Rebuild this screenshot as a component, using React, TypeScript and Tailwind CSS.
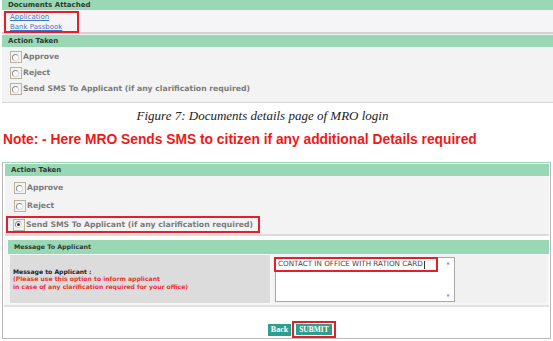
import React from 'react';

const Radio: React.FC<{ checked?: boolean }> = ({ checked }) => (
  <span className="w-[12px] h-[12px] border border-[#b8b39a] flex items-center justify-start pl-[1px] mr-[1px] shrink-0">
    <span className="w-[7px] h-[7px] rounded-full border border-[#8f8f8f] border-r-[#d6d6d6] border-b-[#d6d6d6] bg-white flex items-center justify-center">
      {checked && <span className="w-[3px] h-[3px] rounded-full bg-[#333]" />}
    </span>
  </span>
);

const RadioRow: React.FC<{ label: string; checked?: boolean; boxed?: boolean }> = ({ label, checked, boxed }) => (
  <div
    className={
      boxed
        ? 'flex items-center h-[17px] border-2 border-[#e0202a] w-[254px] -ml-[8px] pl-[5px]'
        : 'flex items-center h-[16px]'
    }
  >
    <Radio checked={checked} />
    <span className="text-[7.7px] font-bold text-[#7b7b7b] whitespace-nowrap">{label}</span>
  </div>
);

const Header: React.FC<{ title: string; className?: string }> = ({ title, className }) => (
  <div className={`bg-[#9ad7b5] font-bold text-[#2b3b33] flex pl-[6px] whitespace-nowrap ${className ?? ''}`}>{title}</div>
);

const App: React.FC = () => {
  return (
    <div
      className="w-[553px] h-[341px] bg-white overflow-hidden"
      style={{ fontFamily: '"DejaVu Sans", Verdana, sans-serif' }}
    >
      {/* top panel */}
      <div className="bg-[#f3f3f3] border-b border-[#d8d8d8] ml-[2px]">
        <Header title="Documents Attached" className="h-[10px] items-end leading-none text-[7px] pb-[1px]" />
        <div className="h-[24px] border-b-2 border-[#d4d0d0] bg-[#f5f4f6] flex">
          <div className="border-2 border-[#e0202a] w-[75px] h-[22px] mt-[1px] ml-[2px] flex flex-col justify-center pl-[4px] leading-[10px]">
            <a className="text-[7px] text-[#3f74c8] underline whitespace-nowrap">Application</a>
            <a className="text-[7px] text-[#3f74c8] underline whitespace-nowrap">Bank Passbook</a>
          </div>
        </div>
        <Header title="Action Taken" className="h-[12px] mt-[1px] items-center text-[7px]" />
        <div className="pl-[8px] pt-[2px] pb-[5px] flex flex-col">
          <RadioRow label="Approve" />
          <RadioRow label="Reject" />
          <RadioRow label="Send SMS To Applicant (if any clarification required)" />
        </div>
      </div>

      <div
        className="text-center text-[13px] italic text-[#222] mt-[5px] leading-[16px] pr-[28px]"
        style={{ fontFamily: '"Liberation Serif", "Times New Roman", serif' }}
      >
        Figure 7: Documents details page of MRO login
      </div>
      <div
        className="text-[13.8px] font-bold text-[#f01818] pl-[3px] mt-[8px] leading-[16px] whitespace-nowrap"
        style={{ fontFamily: '"Liberation Sans", Arial, sans-serif' }}
      >
        Note: - Here MRO Sends SMS to citizen if any additional Details required
      </div>

      {/* second panel */}
      <div className="ml-[2px] mr-[2px] mt-[14px] border border-[#b9b9b9] border-t-[#9ad7b5] h-[177px] bg-white">
        <div className="bg-[#f3f3f3] ml-[2px] mr-[1px] mt-[1px] border-b-2 border-[#dcdcdc]">
          <Header title="Action Taken" className="h-[12px] items-center text-[7px]" />
          <div className="pl-[9px] pt-[4px] pb-[1px] flex flex-col gap-[2px]">
            <RadioRow label="Approve" />
            <RadioRow label="Reject" />
            <RadioRow label="Send SMS To Applicant (if any clarification required)" checked boxed />
          </div>
        </div>
        <div className="bg-[#f6f6f6] ml-[1px] mr-[1px] mt-[4px] border-b-2 border-[#e2e2e2] pb-[2px]">
          <Header title="Message To Applicant" className="h-[14px] ml-[4px] items-center text-[6.3px]" />
          <div className="flex h-[48px] pl-[6px] pr-[2px] mt-[1px] gap-[3px]">
            <div className="w-[260px] bg-[#dcdcdc] flex flex-col justify-center pl-[3px] leading-[7.5px] whitespace-nowrap">
              <div className="text-[6.1px] font-bold text-[#222]">Message to Applicant :</div>
              <div className="text-[6.1px] font-bold text-[#f03030]">(Please use this option to inform applicant</div>
              <div className="text-[6.1px] font-bold text-[#f03030]">in case of any clarification required for your office)</div>
            </div>
            <div className="flex-1 bg-[#f1f1f1] pl-[2px] pt-[2px]">
              <div className="w-[180px] h-[45px] bg-white border border-[#a9a9a9] relative flex">
                <div className="flex-1" />
                <div className="w-[12px] flex flex-col justify-between items-center text-[4px] text-[#999] py-[2px]">
                  <span>▲</span>
                  <span>▼</span>
                </div>
                <div className="absolute -left-[2px] -top-[1px] w-[164px] h-[15px] border-2 border-[#e0202a] flex items-center pl-[2px] text-[7.2px] text-[#444] whitespace-nowrap">
                  CONTACT IN OFFICE WITH RATION CARD
                  <span className="w-[1px] h-[8px] bg-[#333] ml-[1px]" />
                </div>
              </div>
            </div>
          </div>
        </div>
        <div
          className="flex items-center gap-[1px] mt-[14px] ml-[265px]"
          style={{ fontFamily: '"Liberation Serif", "Times New Roman", serif' }}
        >
          <button className="bg-[#2f9e8c] text-white text-[8px] font-bold h-[12px] w-[23px] leading-none mt-[1px]">
            Back
          </button>
          <span className="border-2 border-[#e0202a] px-[2px] py-[1px]">
            <button className="bg-[#2f9e8c] text-white text-[7.5px] font-bold h-[11px] w-[36px] leading-none block">
              SUBMIT
            </button>
          </span>
        </div>
      </div>
    </div>
  );
};

export default App;
